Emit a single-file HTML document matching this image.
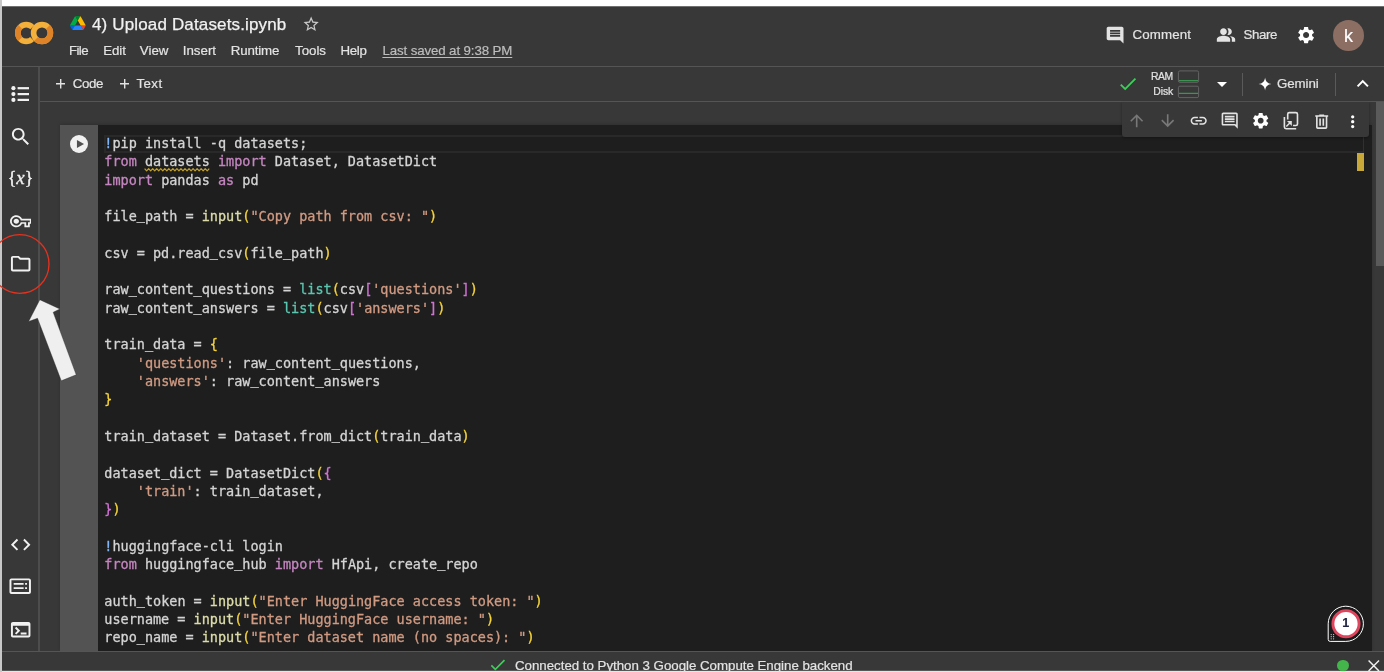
<!DOCTYPE html>
<html lang="en"><head><meta charset="utf-8"><title>4) Upload Datasets.ipynb - Colab</title>
<style>
html,body{margin:0;padding:0;}
body{width:1384px;height:672px;overflow:hidden;position:relative;background:#383838;font-family:"Liberation Sans",Arial,sans-serif;}
.t{position:absolute;white-space:pre;-webkit-text-stroke:0.2px;}
#app{position:absolute;left:0;top:0;width:1384px;height:672px;will-change:transform;}
.i{position:absolute;display:block;}
.b{position:absolute;}
pre.code{position:absolute;margin:0;left:104.3px;top:0;font-family:"DejaVu Sans Mono","Liberation Mono",monospace;font-size:13.49px;line-height:18.306px;color:#d4d4d4;white-space:pre;-webkit-text-stroke:0.3px;}
.u{position:relative;top:-1.8px}
.k{color:#c586c0} .s{color:#d09a82} .f{color:#dcdcaa} .c{color:#5cc6b0} .y{color:#f6d43a} .p{color:#d072d3} .m{color:#82b8f8}
</style></head><body><div id="app">

<div class="b" style="left:0;top:0;width:1384px;height:6px;background:#fff"></div>
<div class="b" style="left:0;top:6px;width:1384px;height:1px;background:#707070"></div>
<div class="b" style="left:0;top:66px;width:1384px;height:1px;background:#555555"></div>
<div class="b" style="left:40px;top:101px;width:1344px;height:1px;background:#555555"></div>
<div class="b" style="left:38px;top:67px;width:2px;height:584px;background:#4d4d4d"></div>
<div class="b" style="left:60px;top:125px;width:1312px;height:526px;background:#1e1e1e;box-shadow:0 -1px 3px rgba(0,0,0,.15)"></div>
<div class="b" style="left:60px;top:125px;width:38.3px;height:526px;background:#535353"></div>
<div class="b" style="left:104px;top:135px;width:1257px;height:14px;border:2px solid #292929;border-right-width:1px"></div>
<div class="b" style="left:1363px;top:125px;width:1px;height:28px;background:#303030"></div>
<div class="b" style="left:1357px;top:153px;width:7px;height:18px;background:#c9a83a"></div>
<div class="b" style="left:1376px;top:102px;width:8px;height:164px;background:#5a5a5a"></div>
<svg class="i" style="left:70px;top:135px" width="18" height="18" viewBox="0 0 18 18"><circle cx="9" cy="9" r="9" fill="#f1f1f1"/><path d="M6.950 5v7.900l7.100-3.950z" fill="#505050"/></svg>
<pre class="code" style="top:133.88px"><span class="m">!</span>pip install -q datasets;
<span class="k">from</span> datasets <span class="k">import</span> Dataset, DatasetDict
<span class="k">import</span> pandas <span class="k">as</span> pd

file<span class="u">_</span>path = <span class="f">input</span><span class="y">(</span><span class="s">"Copy path from csv: "</span><span class="y">)</span>

csv = pd.read<span class="u">_</span>csv<span class="y">(</span>file<span class="u">_</span>path<span class="y">)</span>

raw<span class="u">_</span>content<span class="u">_</span>questions = <span class="c">list</span><span class="y">(</span>csv<span class="p">[</span><span class="s">'questions'</span><span class="p">]</span><span class="y">)</span>
raw<span class="u">_</span>content<span class="u">_</span>answers = <span class="c">list</span><span class="y">(</span>csv<span class="p">[</span><span class="s">'answers'</span><span class="p">]</span><span class="y">)</span>

train<span class="u">_</span>data = <span class="y">{</span>
    <span class="s">'questions'</span>: raw<span class="u">_</span>content<span class="u">_</span>questions,
    <span class="s">'answers'</span>: raw<span class="u">_</span>content<span class="u">_</span>answers
<span class="y">}</span>

train<span class="u">_</span>dataset = Dataset.from<span class="u">_</span>dict<span class="y">(</span>train<span class="u">_</span>data<span class="y">)</span>

dataset<span class="u">_</span>dict = DatasetDict<span class="y">(</span><span class="p">{</span>
    <span class="s">'train'</span>: train<span class="u">_</span>dataset,
<span class="p">}</span><span class="y">)</span>

<span class="m">!</span>huggingface-cli login
<span class="k">from</span> huggingface<span class="u">_</span>hub <span class="k">import</span> HfApi, create<span class="u">_</span>repo

auth<span class="u">_</span>token = <span class="f">input</span><span class="y">(</span><span class="s">"Enter HuggingFace access token: "</span><span class="y">)</span>
username = <span class="f">input</span><span class="y">(</span><span class="s">"Enter HuggingFace username: "</span><span class="y">)</span>
repo<span class="u">_</span>name = <span class="f">input</span><span class="y">(</span><span class="s">"Enter dataset name (no spaces): "</span><span class="y">)</span></pre>
<svg class="i" style="left:0;top:0" width="260" height="180" viewBox="0 0 260 180"><path d="M144.60 168.6 L146.62 170.9 L148.64 168.6 L150.66 170.9 L152.68 168.6 L154.70 170.9 L156.72 168.6 L158.74 170.9 L160.76 168.6 L162.78 170.9 L164.80 168.6 L166.82 170.9 L168.84 168.6 L170.86 170.9 L172.88 168.6 L174.90 170.9 L176.92 168.6 L178.94 170.9 L180.96 168.6 L182.98 170.9 L185.00 168.6 L187.02 170.9 L189.04 168.6 L191.06 170.9 L193.08 168.6 L195.10 170.9 L197.12 168.6 L199.14 170.9 L201.16 168.6 L203.18 170.9 L205.20 168.6 L207.22 170.9 L209.24 168.6" fill="none" stroke="#c2a02c" stroke-width="1.200" stroke-linejoin="round"/></svg>
<div class="b" style="left:0;top:651px;width:1384px;height:21px;background:#383838;border-top:1px solid #555555;box-sizing:border-box"></div>
<div class="b" style="left:0;top:670px;width:1384px;height:2px;background:linear-gradient(#585858 0,#585858 1px,#e6e6e6 1px)"></div>
<div class="b" style="left:0;top:0;width:2px;height:672px;background:#c7c8c7"></div>
<svg class="i" style="left:14px;top:21px" width="40" height="24" viewBox="0 0 40 24">
<g fill="none" stroke-width="5.6">
<circle cx="12.2" cy="12" r="8.4" stroke="#f3b03a" stroke-dasharray="39.6 13.2" transform="rotate(45 12.2 12)"/>
<circle cx="28" cy="12" r="8.4" stroke="#f3b03a"/>
<path d="M6.26 6.06A8.4 8.4 0 0 0 6.26 17.94" stroke="#df8328"/>
<path d="M33.94 6.06A8.4 8.4 0 0 1 22.06 17.94" stroke="#df8328"/>
</g></svg>
<svg class="i" style="left:70px;top:16px" width="15.6" height="14" viewBox="0 0 87.3 78">
<path d="m6.6 66.850 3.850 6.650c.8 1.400 1.950 2.500 3.300 3.300l13.750-23.800h-27.500c0 1.550.4 3.100 1.200 4.500z" fill="#0066da"/>
<path d="m43.650 25-13.750-23.800c-1.350.8-2.500 1.900-3.300 3.300l-25.400 44a9.060 9.060 0 0 0 -1.200 4.500h27.500z" fill="#00ac47"/>
<path d="m73.550 76.800c1.350-.8 2.500-1.900 3.300-3.300l1.600-2.750 7.650-13.250c.8-1.400 1.200-2.950 1.200-4.500h-27.502l5.852 11.500z" fill="#ea4335"/>
<path d="m43.650 25 13.750-23.800c-1.350-.8-2.900-1.200-4.500-1.200h-18.500c-1.600 0-3.150.45-4.500 1.200z" fill="#00832d"/>
<path d="m59.800 53h-32.300l-13.750 23.800c1.350.8 2.900 1.200 4.500 1.200h50.800c1.600 0 3.150-.45 4.500-1.200z" fill="#2684fc"/>
<path d="m73.400 26.500-12.700-22c-.8-1.400-1.950-2.500-3.300-3.300l-13.750 23.800 16.150 28h27.450c0-1.550-.4-3.100-1.200-4.500z" fill="#ffba00"/>
</svg>
<div class="t " style="left:92.00px;top:14.71px;font-size:17px;line-height:20px;letter-spacing:0.148px;color:#f1f1f1;-webkit-text-stroke:0.25px #f1f1f1;">4) Upload Datasets.ipynb</div>
<svg class="i" style="left:301.95px;top:14.75px" width="18.3" height="18.3" viewBox="0 0 24 24" fill="#c8c8c8" ><path d="M22 9.24l-7.19-.62L12 2 9.19 8.63 2 9.24l5.46 4.73L5.82 21 12 17.27 18.18 21l-1.63-7.03L22 9.240zM12 15.4l-3.760 2.270 1-4.280-3.320-2.880 4.380-.38L12 6.100l1.710 4.040 4.380.38-3.320 2.880 1 4.280L12 15.400z"/></svg>
<div class="t " style="left:69.00px;top:41.39px;font-size:13.3px;line-height:20px;letter-spacing:-0.611px;color:#e3e3e3;">File</div>
<div class="t " style="left:103.30px;top:41.39px;font-size:13.3px;line-height:20px;letter-spacing:-0.106px;color:#e3e3e3;">Edit</div>
<div class="t " style="left:139.80px;top:41.39px;font-size:13.3px;line-height:20px;letter-spacing:0.004px;color:#e3e3e3;">View</div>
<div class="t " style="left:182.80px;top:41.39px;font-size:13.3px;line-height:20px;letter-spacing:-0.013px;color:#e3e3e3;">Insert</div>
<div class="t " style="left:230.80px;top:41.39px;font-size:13.3px;line-height:20px;letter-spacing:-0.154px;color:#e3e3e3;">Runtime</div>
<div class="t " style="left:295.00px;top:41.39px;font-size:13.3px;line-height:20px;letter-spacing:-0.012px;color:#e3e3e3;">Tools</div>
<div class="t " style="left:340.40px;top:41.39px;font-size:13.3px;line-height:20px;letter-spacing:-0.318px;color:#e3e3e3;">Help</div>
<div class="t " style="left:382.40px;top:41.39px;font-size:13.3px;line-height:20px;letter-spacing:-0.117px;color:#bdbdbd;text-decoration:underline;text-underline-offset:1.600px;text-decoration-thickness:1.200px;">Last saved at 9:38 PM</div>
<svg class="i" style="left:1104.90px;top:24.90px" width="20.2" height="20.2" viewBox="0 0 24 24" fill="#e3e3e3" ><path d="M21.99 4c0-1.100-.89-2-1.99-2H4c-1.100 0-2 .9-2 2v12c0 1.100.9 2 2 2h14l4 4-.01-18zM18 14H6v-2h12v2zm0-3H6V9h12v2zm0-3H6V6h12v2z"/></svg>
<div class="t " style="left:1132.50px;top:25.39px;font-size:13.3px;line-height:20px;letter-spacing:0.142px;color:#e3e3e3;">Comment</div>
<svg class="i" style="left:1215.90px;top:25.35px" width="20" height="20" viewBox="0 0 24 24" fill="#e3e3e3" ><path d="M16.670 13.130C18.040 14.060 19 15.320 19 17v3h4v-3c0-2.180-3.570-3.470-6.330-3.870zM15 12c2.210 0 4-1.790 4-4s-1.790-4-4-4c-.470 0-.910.100-1.330.240C14.500 5.270 15 6.580 15 8s-.500 2.730-1.330 3.760c.420.140.860.240 1.330.240zM9 12c2.210 0 4-1.790 4-4s-1.790-4-4-4-4 1.790-4 4 1.790 4 4 4zM9 13c-2.670 0-8 1.340-8 4v3h16v-3c0-2.660-5.330-4-8-4z"/></svg>
<div class="t " style="left:1243.40px;top:25.39px;font-size:13.3px;line-height:20px;letter-spacing:-0.373px;color:#e3e3e3;">Share</div>
<svg class="i" style="left:1296.10px;top:25.10px" width="20.2" height="20.2" viewBox="0 0 24 24" fill="#ffffff" ><path d="M19.140 12.940c.040-.3.060-.610.060-.940 0-.320-.020-.640-.070-.940l2.030-1.580c.180-.140.230-.410.120-.610l-1.920-3.320c-.120-.220-.370-.290-.590-.220l-2.390.960c-.5-.380-1.030-.7-1.620-.940l-.360-2.540c-.040-.240-.240-.410-.480-.410h-3.840c-.240 0-.430.170-.470.410l-.360 2.540c-.590.240-1.130.570-1.620.940l-2.390-.960c-.220-.080-.470 0-.590.220L2.740 8.870c-.120.210-.080.470.120.610l2.030 1.580c-.050.3-.090.630-.090.940s.020.640.070.940l-2.030 1.580c-.180.140-.230.410-.120.610l1.920 3.320c.120.220.370.290.590.220l2.390-.960c.5.380 1.030.7 1.620.940l.360 2.540c.050.240.240.410.480.410h3.840c.240 0 .440-.170.470-.410l.360-2.540c.590-.240 1.130-.560 1.620-.940l2.390.960c.220.080.470 0 .590-.220l1.920-3.320c.120-.220.070-.470-.120-.610l-2.010-1.580zM12 15.600c-1.980 0-3.600-1.620-3.600-3.600s1.620-3.600 3.600-3.600 3.600 1.620 3.600 3.600-1.620 3.600-3.600 3.600z"/></svg>
<div class="b" style="left:1333.1px;top:19.8px;width:31px;height:31px;border-radius:50%;background:#8d6e63"></div>
<div class="t " style="left:1344.10px;top:25.96px;font-size:18px;line-height:20px;letter-spacing:-0.300px;color:#ffffff;">k</div>
<svg class="i" style="left:55.90px;top:79.30px" width="9.400" height="9.400" viewBox="0 0 10 10"><path d="M4.250 0h1.500v4.250h4.250v1.500h-4.250v4.250h-1.500v-4.250h-4.250v-1.500h4.250z" fill="#e3e3e3"/></svg>
<div class="t " style="left:72.80px;top:73.59px;font-size:13.3px;line-height:20px;letter-spacing:-0.399px;color:#e3e3e3;">Code</div>
<svg class="i" style="left:120.05px;top:79.30px" width="9.400" height="9.400" viewBox="0 0 10 10"><path d="M4.250 0h1.500v4.250h4.250v1.500h-4.250v4.250h-1.500v-4.250h-4.250v-1.500h4.250z" fill="#e3e3e3"/></svg>
<div class="t " style="left:136.40px;top:73.59px;font-size:13.3px;line-height:20px;letter-spacing:0.436px;color:#e3e3e3;">Text</div>
<svg class="i" style="left:1116.80px;top:73.20px" width="21.8" height="21.8" viewBox="0 0 24 24" fill="#3ecf5a" ><path d="M9 16.170L4.830 12l-1.420 1.410L9 19 21 7l-1.410-1.410L9 16.170z"/></svg>
<div class="t " style="left:1151.00px;top:66.80px;font-size:10.4px;line-height:20px;letter-spacing:-0.406px;color:#e3e3e3;">RAM</div>
<div class="t " style="left:1153.30px;top:82.00px;font-size:10.4px;line-height:20px;letter-spacing:-0.074px;color:#e3e3e3;">Disk</div>
<svg class="i" style="left:1170px;top:66px" width="40" height="36" viewBox="0 0 40 36"><g fill="none" stroke="#646464" stroke-width="1"><rect x="8.400" y="4.900" width="20.200" height="11.400" rx="1.500"/><rect x="8.400" y="20.200" width="20.200" height="11.400" rx="1.500"/></g><path d="M8.900 14.600h19.200M8.900 27.400h19.200" stroke="#3b9450" stroke-width="1.300"/></svg>
<svg class="i" style="left:1210.00px;top:72.30px" width="24" height="24" viewBox="0 0 24 24" fill="#ffffff" ><path d="M7 10l5 5 5-5z"/></svg>
<div class="b" style="left:1242px;top:72.5px;width:1px;height:23px;background:#5a5a5a"></div>
<svg class="i" style="left:1258.20px;top:77.20px" width="14.2" height="14.2" viewBox="0 0 24 24" fill="#ffffff" ><path d="M12 1C12.600 7.500 16.500 11.400 23 12C16.500 12.600 12.600 16.500 12 23C11.400 16.500 7.500 12.600 1 12C7.500 11.400 11.400 7.500 12 1z"/></svg>
<div class="t " style="left:1277.00px;top:73.59px;font-size:13.3px;line-height:20px;letter-spacing:-0.066px;color:#e3e3e3;">Gemini</div>
<div class="b" style="left:1334.6px;top:72.5px;width:1px;height:23px;background:#5a5a5a"></div>
<svg class="i" style="left:1350.65px;top:71.95px" width="23.5" height="23.5" viewBox="0 0 24 24" fill="#ffffff" ><path d="M12 8l-6 6 1.410 1.410L12 10.830l4.590 4.580L18 14l-6-6z"/></svg>
<div class="b" style="left:1121.5px;top:102px;width:247px;height:34.6px;background:#383838;border-radius:0 0 3px 3px;box-shadow:0 1px 3px rgba(0,0,0,.35)"></div>
<svg class="i" style="left:1127.10px;top:111.30px" width="19.4" height="19.4" viewBox="0 0 24 24" fill="#787878" ><path d="M4 12l1.410 1.410L11 7.830V20h2V7.830l5.580 5.590L20 12l-8-8-8 8z"/></svg>
<svg class="i" style="left:1157.80px;top:111.30px" width="19.4" height="19.4" viewBox="0 0 24 24" fill="#787878" ><path d="M20 12l-1.410-1.410L13 16.170V4h-2v12.170l-5.580-5.590L4 12l8 8 8-8z"/></svg>
<svg class="i" style="left:1188.90px;top:111.20px" width="19.4" height="19.4" viewBox="0 0 24 24" fill="#e3e3e3" ><path d="M3.900 12c0-1.710 1.390-3.100 3.100-3.100h4V7H7c-2.760 0-5 2.240-5 5s2.240 5 5 5h4v-1.900H7c-1.710 0-3.100-1.390-3.100-3.100zM8 13h8v-2H8v2zm9-6h-4v1.900h4c1.710 0 3.100 1.390 3.100 3.100s-1.390 3.100-3.100 3.100h-4V17h4c2.760 0 5-2.240 5-5s-2.240-5-5-5z"/></svg>
<svg class="i" style="left:1219.60px;top:111.10px" width="19.4" height="19.4" viewBox="0 0 24 24" fill="#e3e3e3" ><path d="M21.990 4c0-1.100-.890-2-1.990-2H4c-1.100 0-2 .900-2 2v12c0 1.100.900 2 2 2h14l4 4-.010-18zM20 4v13.170L18.830 16H4V4h16zM6 12h12v2H6zm0-3h12v2H6zm0-3h12v2H6z"/></svg>
<svg class="i" style="left:1250.60px;top:111.30px" width="19.4" height="19.4" viewBox="0 0 24 24" fill="#ffffff" ><path d="M19.140 12.940c.040-.3.060-.610.060-.940 0-.320-.020-.640-.070-.940l2.030-1.580c.180-.140.230-.410.120-.610l-1.920-3.320c-.120-.220-.370-.290-.590-.220l-2.390.960c-.5-.380-1.030-.7-1.620-.940l-.360-2.540c-.040-.240-.240-.410-.480-.410h-3.840c-.240 0-.430.170-.470.410l-.360 2.540c-.590.240-1.130.570-1.620.940l-2.390-.960c-.220-.080-.470 0-.590.220L2.740 8.870c-.120.210-.080.470.120.610l2.030 1.580c-.050.3-.090.630-.090.940s.020.640.070.940l-2.030 1.580c-.180.140-.230.410-.120.610l1.920 3.320c.120.220.370.290.590.220l2.390-.960c.5.380 1.030.7 1.620.940l.360 2.540c.050.240.240.410.480.410h3.840c.240 0 .440-.170.470-.410l.360-2.540c.590-.240 1.130-.560 1.620-.940l2.390.960c.220.080.470 0 .590-.220l1.920-3.320c.120-.220.070-.470-.120-.610l-2.010-1.580zM12 15.600c-1.980 0-3.600-1.620-3.600-3.600s1.620-3.600 3.600-3.600 3.600 1.620 3.600 3.600-1.620 3.600-3.600 3.600z"/></svg>
<svg class="i" style="left:1280.80px;top:111.30px" width="19.4" height="19.4" viewBox="0 0 24 24" fill="none" stroke="#e3e3e3" stroke-width="2" stroke-linecap="butt">
<path d="M8.300 10.400V4a2 2 0 0 1 2-2h8.100a2 2 0 0 1 2 2v12a2 2 0 0 1-2 2h-3.500"/>
<path d="M4.200 7.500v12.400a2 2 0 0 0 2 2h12.600"/>
<path d="M6.600 19.200l4.600-4.600" stroke-width="1.800"/>
<path d="M7.400 12.500h6v6z" fill="#e3e3e3" stroke="none"/>
</svg>
<svg class="i" style="left:1312.10px;top:111.70px" width="19.4" height="19.4" viewBox="0 0 24 24" fill="#e3e3e3" ><path d="M7 21q-.825 0-1.412-.587T5 19V6H4V4h5V3h6v1h5v2h-1v13q0 .825-.587 1.413T17 21zM17 6H7v13h10zM9 17h2V8H9zm4 0h2V8h-2z"/></svg>
<svg class="i" style="left:1343.10px;top:111.50px" width="19.4" height="19.4" viewBox="0 0 24 24" fill="#ffffff" ><path d="M12 8c1.100 0 2-.900 2-2s-.900-2-2-2-2 .900-2 2 .900 2 2 2zm0 2c-1.100 0-2 .900-2 2s.900 2 2 2 2-.900 2-2-.900-2-2-2zm0 6c-1.100 0-2 .900-2 2s.900 2 2 2 2-.900 2-2-.900-2-2-2z"/></svg>
<svg class="i" style="left:0;top:80px" width="40" height="30" viewBox="0 0 40 30" fill="#f1f1f1"><circle cx="13.400" cy="8.200" r="2.100"/><circle cx="13.400" cy="14.100" r="2.100"/><circle cx="13.400" cy="19.900" r="2.100"/><rect x="17.600" y="7.100" width="11.400" height="2.200"/><rect x="17.600" y="13" width="11.400" height="2.200"/><rect x="17.600" y="18.800" width="11.400" height="2.200"/></svg>
<svg class="i" style="left:8.70px;top:125.40px" width="23.4" height="23.4" viewBox="0 0 24 24" fill="#f1f1f1" ><path d="M15.500 14h-.790l-.280-.270C15.410 12.590 16 11.110 16 9.500 16 5.910 13.090 3 9.500 3S3 5.910 3 9.500 5.910 16 9.500 16c1.610 0 3.090-.590 4.230-1.570l.270.280v.790l5 4.990L20.490 19l-4.990-5zm-6 0C7.010 14 5 11.990 5 9.500S7.010 5 9.500 5 14 7.010 14 9.500 11.990 14 9.500 14z"/></svg>
<div class="t" style="left:5.4px;top:164px;width:30px;text-align:center;font-family:'Liberation Serif',serif;font-size:19px;line-height:28px;color:#f1f1f1;letter-spacing:-0.35px;-webkit-text-stroke:0.3px">{<i>x</i>}</div>
<svg class="i" style="left:9.600px;top:210.800px" width="21.600" height="20.600" viewBox="0 0 24 24" preserveAspectRatio="none" fill="#f1f1f1"><path d="M22 19h-6v-4h-2.680c-1.140 2.420-3.600 4-6.320 4-3.860 0-7-3.140-7-7s3.140-7 7-7c2.720 0 5.170 1.580 6.320 4H24v6h-2v4zm-4-2h2v-4h2v-2H11.940l-.230-.670C11.010 8.340 9.110 7 7 7c-2.760 0-5 2.240-5 5s2.240 5 5 5c2.110 0 4.010-1.340 4.710-3.330l.230-.670H18v4zM7 15c-1.650 0-3-1.350-3-3s1.350-3 3-3 3 1.350 3 3-1.350 3-3 3z"/></svg>
<svg class="i" style="left:9.00px;top:251.50px" width="23.4" height="23.4" viewBox="0 0 24 24" fill="#f1f1f1" ><path d="M9.170 6l2 2H20v10H4V6h5.170M10 4H4c-1.100 0-1.990.900-1.990 2L2 18c0 1.100.900 2 2 2h16c1.100 0 2-.900 2-2V8c0-1.100-.900-2-2-2h-8l-2-2z"/></svg>
<svg class="i" style="left:8.60px;top:533.20px" width="23.4" height="23.4" viewBox="0 0 24 24" fill="#f1f1f1" ><path d="M9.400 16.600L4.800 12l4.600-4.600L8 6l-6 6 6 6 1.400-1.400zm5.200 0l4.600-4.600-4.600-4.600L16 6l6 6-6 6-1.400-1.400z"/></svg>
<svg class="i" style="left:8.5px;top:574.3px" width="23.4" height="23.4" viewBox="0 0 24 24" fill="#f1f1f1">
<path d="M20.500 4.500h-18C1.400 4.500 .5 5.400 .5 6.500v12c0 1.100.9 2 2 2h18c1.100 0 2-.9 2-2v-12c0-1.100-.9-2-2-2zm0 14h-18v-12h18v12z"/>
<path d="M4.800 9.300h10.200v1.800H4.800zM4.800 13.500h10.200v1.800H4.800zM16.500 9.300h2v1.800h-2zM16.500 13.500h2v1.800h-2z"/></svg>
<svg class="i" style="left:8.70px;top:617.70px" width="23.4" height="23.4" viewBox="0 0 24 24" fill="#f1f1f1" ><path d="M20 4H4c-1.110 0-2 .900-2 2v12c0 1.100.890 2 2 2h16c1.100 0 2-.900 2-2V6c0-1.100-.900-2-2-2zm0 14H4V8h16v10zm-2-1h-6v-2h6v2zM7.500 17l-1.410-1.410L8.670 13l-2.590-2.590L7.500 9l4 4-4 4z"/></svg>
<svg class="i" style="left:0;top:0" width="120" height="400" viewBox="0 0 120 400">
<circle cx="19.700" cy="264" r="29.300" fill="none" stroke="#e5321f" stroke-width="1.300"/>
<path d="M39.800 299.700L59.900 309L53.200 312.300L76.200 374.800L61.300 380.800L37.500 318.300L28.600 321.500z" fill="#efefef" stroke="rgba(40,40,40,.5)" stroke-width="0.800"/>
</svg>
<svg class="i" style="left:488.25px;top:655.05px" width="19.5" height="19.5" viewBox="0 0 24 24" fill="#3ecf5a" ><path d="M9 16.170L4.830 12l-1.420 1.410L9 19 21 7l-1.410-1.410L9 16.170z"/></svg>
<div class="t " style="left:515.00px;top:655.69px;font-size:13.3px;line-height:20px;letter-spacing:-0.019px;color:#e3e3e3;">Connected to Python 3 Google Compute Engine backend</div>
<div class="b" style="left:1337.3px;top:659.6px;width:11.8px;height:11.8px;border-radius:50%;background:#43b54a"></div>
<svg class="i" style="left:1368px;top:659.700px" width="11.600" height="11.600" viewBox="0 0 12 12"><path d="M0.600 0.600L11.400 11.400M11.400 0.600L0.600 11.400" stroke="#f1f1f1" stroke-width="1.500" fill="none"/></svg>
<svg class="i" style="left:1326px;top:604px" width="40" height="40" viewBox="0 0 40 40">
<path d="M19.800 2.200a17.600 17.600 0 0 1 0 35.200H4.200a2 2 0 0 1-2-2V19.800a17.600 17.600 0 0 1 17.600-17.600z" fill="#1b1b1b" stroke="#ffffff" stroke-width="1"/>
<circle cx="20" cy="19.700" r="13.100" fill="#ffffff" stroke="#e0455e" stroke-width="2.900"/>
<g fill="#d8d8d8"><circle cx="5.200" cy="30.600" r=".600"/><circle cx="7.600" cy="30.600" r=".600"/><circle cx="5.200" cy="32.700" r=".600"/><circle cx="7.600" cy="32.700" r=".600"/><circle cx="5.200" cy="34.800" r=".600"/><circle cx="7.600" cy="34.800" r=".600"/></g>
</svg>
<div class="t " style="left:1342.20px;top:613.13px;font-size:12.6px;line-height:20px;letter-spacing:-0.208px;color:#1f2340;font-weight:bold;">1</div>
</div></body></html>
